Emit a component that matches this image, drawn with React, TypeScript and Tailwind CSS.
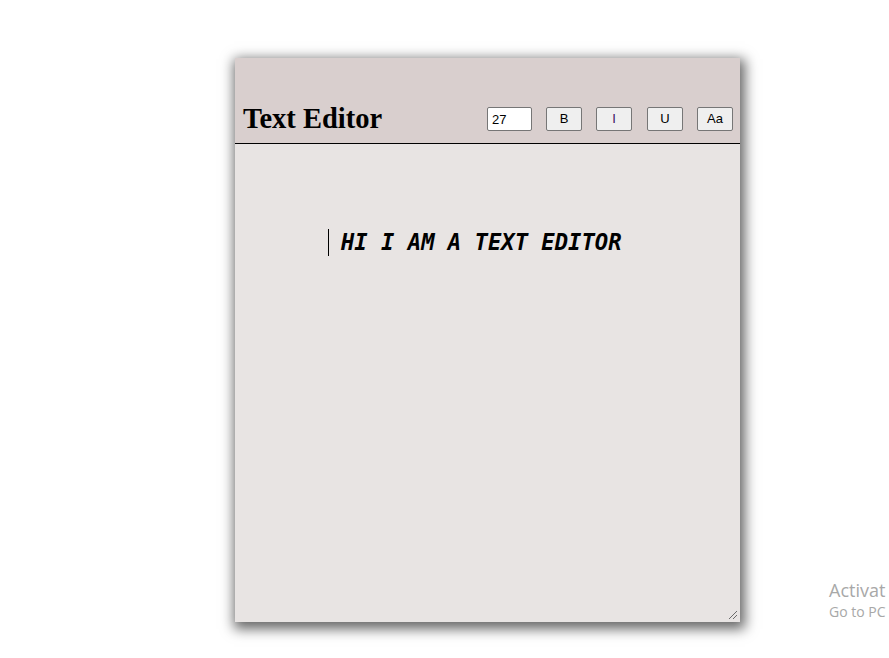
import React, { useState } from 'react';

function App() {
  const [size, setSize] = useState('27');

  return (
    <div className="relative min-h-screen overflow-hidden bg-white pl-[235px] pt-[58px]">
      {/* Editor panel */}
      <div className="flex h-[564px] w-[505px] flex-col shadow-[2px_4px_12px_3px_rgba(0,0,0,0.6)]">
        {/* Header */}
        <header className="flex h-[86px] items-end justify-between border-b border-black bg-[#d9cfce] pb-[8px] pl-[8px] pr-[7px]">
          <h1 className="text-[28.5px] font-bold leading-[32px] text-black [font-family:'Liberation_Serif',serif]">
            Text Editor
          </h1>
          <div className="mb-[4px] flex items-center [font-family:'Liberation_Sans',Arial,sans-serif]">
            <input
              value={size}
              onChange={(e) => setSize(e.target.value)}
              className="h-[24px] w-[45px] rounded-[2px] border border-[#767676] bg-white px-[4px] text-[13px] text-black outline-none"
            />
            <button className="ml-[14px] h-[24px] w-[36px] rounded-[2px] border border-[#767676] bg-[#efefef] text-[13px] font-normal text-black">
              B
            </button>
            <button className="ml-[14px] h-[24px] w-[36px] rounded-[2px] border border-[#767676] bg-[#efefef] text-[13px] font-normal text-[#3a0a60]">
              I
            </button>
            <button className="ml-[15px] h-[24px] w-[36px] rounded-[2px] border border-[#767676] bg-[#efefef] text-[13px] font-normal text-black">
              U
            </button>
            <button className="ml-[14px] h-[24px] w-[36px] rounded-[2px] border border-[#767676] bg-[#efefef] text-[13px] font-normal text-black">
              Aa
            </button>
          </div>
        </header>

        {/* Body */}
        <div className="relative flex-1 bg-[#e8e4e3] pl-[93px] pt-[85px]">
          <div className="flex items-center">
            <span className="h-[27px] w-px bg-black" />
            <p className="ml-[12px] text-[22.2px] font-bold italic leading-[27px] text-black [font-family:'DejaVu_Sans_Mono',monospace]">
              HI I AM A TEXT EDITOR
            </p>
          </div>
          {/* resize grip */}
          <svg className="absolute bottom-[2px] right-[2px]" width="10" height="10" viewBox="0 0 10 10">
            <path d="M1 9 L9 1 M5 9 L9 5" stroke="#6b6b6b" strokeWidth="1" />
          </svg>
        </div>
      </div>

      {/* Windows activation watermark, cut by the window edge */}
      <div className="absolute left-[829px] top-[578px] whitespace-nowrap text-[#a8a8a8] [font-family:'Open_Sans',sans-serif]">
        <div className="text-[18px] leading-[24px]">Activat</div>
        <div className="text-[14px] leading-[20px]">Go to PC</div>
      </div>
    </div>
  );
}

export default App;
